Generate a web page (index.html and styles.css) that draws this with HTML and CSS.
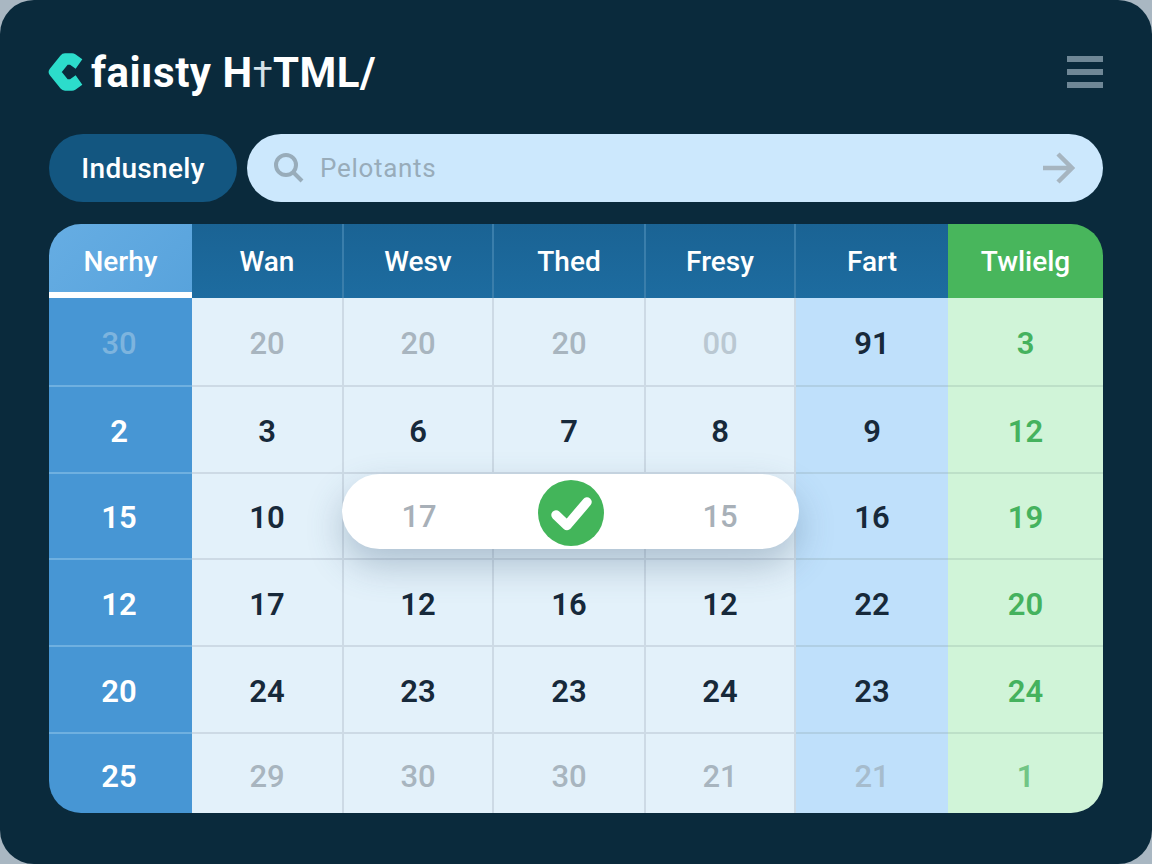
FILE: index.html
```html
<!DOCTYPE html>
<html lang="en">

<head>
  <meta charset="UTF-8" />
  <meta name="viewport" content="width=device-width, initial-scale=1.0" />
  <title>faiısty HTML/</title>
  <link rel="stylesheet" href="styles.css">
</head>

<body>
  <div class="app">
    <header class="topbar">
      <div class="brand">
        <svg class="logo" viewBox="0 0 35 38" width="35" height="38">
          <path d="M31 11 L24 6 L17 6 L6.500 19 L17 32 L24 32 L31 27" />
        </svg>
        <span class="brand-name">faiısty H<span class="brand-odd">†</span>TML/</span>
      </div>
      <div class="menu">
        <span></span>
        <span></span>
        <span></span>
      </div>
    </header>

    <div class="filters">
      <div class="pill">Indusnely</div>
      <div class="search">
        <svg class="search-icon" viewBox="0 0 32 32" width="32" height="32">
          <circle cx="13" cy="13" r="10" />
          <path d="M20.500 20.500 L29 29" />
        </svg>
        <span class="search-text">Pelotants</span>
        <svg class="arrow-icon" viewBox="0 0 32 32" width="32" height="32">
          <path d="M0 16 H28 M15 2 L29 16 L15 30" />
        </svg>
      </div>
    </div>

    <div class="calendar">
      <div class="head head-first">Nerhy</div>
      <div class="head">Wan</div>
      <div class="head">Wesv</div>
      <div class="head">Thed</div>
      <div class="head">Fresy</div>
      <div class="head head-sky">Fart</div>
      <div class="head head-last">Twlielg</div>

      <div class="cell side faint">30</div>
      <div class="cell muted">20</div>
      <div class="cell muted">20</div>
      <div class="cell muted">20</div>
      <div class="cell muted light">00</div>
      <div class="cell sky">91</div>
      <div class="cell mint">3</div>

      <div class="cell side">2</div>
      <div class="cell">3</div>
      <div class="cell">6</div>
      <div class="cell">7</div>
      <div class="cell">8</div>
      <div class="cell sky">9</div>
      <div class="cell mint">12</div>

      <div class="cell side">15</div>
      <div class="cell">10</div>
      <div class="cell"></div>
      <div class="cell"></div>
      <div class="cell"></div>
      <div class="cell sky">16</div>
      <div class="cell mint">19</div>

      <div class="cell side">12</div>
      <div class="cell">17</div>
      <div class="cell">12</div>
      <div class="cell">16</div>
      <div class="cell">12</div>
      <div class="cell sky">22</div>
      <div class="cell mint">20</div>

      <div class="cell side">20</div>
      <div class="cell">24</div>
      <div class="cell">23</div>
      <div class="cell">23</div>
      <div class="cell">24</div>
      <div class="cell sky">23</div>
      <div class="cell mint">24</div>

      <div class="cell side last-row corner-left">25</div>
      <div class="cell muted last-row">29</div>
      <div class="cell muted last-row">30</div>
      <div class="cell muted last-row">30</div>
      <div class="cell muted last-row">21</div>
      <div class="cell sky muted-sky last-row">21</div>
      <div class="cell mint mint-soft last-row corner-right">1</div>

      <div class="popup">
        <span class="popup-num">17</span>
        <span class="check">
          <svg viewBox="0 0 66 66" width="66" height="66">
            <path d="M18 35 L29 45.500 L49 22" />
          </svg>
        </span>
        <span class="popup-num">15</span>
      </div>
    </div>
  </div>
</body>

</html>
```

FILE: styles.css
```css
* {
  margin: 0;
  padding: 0;
  box-sizing: border-box;
}

body {
  font-family: "Roboto", "Liberation Sans", sans-serif;
  background-color: #a9b7c2;
  height: 100vh;
  overflow: hidden;
}

.app {
  height: 864px;
  padding: 50px 49px 51px;
  border-radius: 34px;
  background-color: #0a2a3c;
  display: flex;
  flex-direction: column;
}

.topbar {
  height: 44px;
  display: flex;
  justify-content: space-between;
  align-items: center;
}

.brand {
  display: flex;
  align-items: center;
  gap: 8px;
  margin-left: -1px;
}

.logo path {
  fill: none;
  stroke: #2cdccb;
  stroke-width: 11.500;
  stroke-linejoin: round;
}

.brand-name {
  font-size: 42px;
  font-weight: 700;
  color: #fff;
  letter-spacing: 0.5px;
}

.brand-odd {
  font-weight: 400;
  font-size: 36px;
  color: #d5e2e8;
}

.menu {
  width: 36px;
  display: flex;
  flex-direction: column;
  gap: 7px;
}

.menu span {
  height: 6px;
  background-color: #6f8796;
}

.filters {
  margin-top: 40px;
  display: flex;
  gap: 10px;
}

.pill {
  width: 188px;
  height: 68px;
  border-radius: 34px;
  background-color: #135680;
  color: #fff;
  font-size: 28px;
  font-weight: 500;
  letter-spacing: 0.3px;
  display: flex;
  justify-content: center;
  align-items: center;
}

.search {
  flex: 1;
  height: 68px;
  border-radius: 34px;
  background-color: #cce8fd;
  padding: 0 28px 0 26px;
  display: flex;
  align-items: center;
  gap: 15px;
}

.search-icon circle,
.search-icon path {
  fill: none;
  stroke: #98acba;
  stroke-width: 4;
}

.search-text {
  flex: 1;
  font-size: 26px;
  letter-spacing: 0.7px;
  color: #98acba;
}

.arrow-icon path {
  fill: none;
  stroke: #a6b5c0;
  stroke-width: 4.500;
}

.calendar {
  position: relative;
  margin-top: 22px;
  display: grid;
  grid-template-columns: 143px 152px 150px 152px 150px 152px 155px;
  grid-template-rows: 74px 89px 87px 86px 87px 87px 79px;
}

.head {
  background: linear-gradient(180deg, #1a6394, #1d6ca0);
  border-right: 2px solid #3a7eab;
  color: #fff;
  font-size: 28px;
  font-weight: 500;
  display: flex;
  justify-content: center;
  align-items: center;
}

.head-first {
  background: linear-gradient(135deg, #66ade3, #58a3dc);
  border-right: none;
  border-bottom: 6px solid #fff;
  border-top-left-radius: 32px;
  padding-top: 6px;
}

.head-sky {
  border-right: none;
}

.head-last {
  background: #48b65c;
  border-right: none;
  border-top-right-radius: 32px;
}

.cell {
  background-color: #e3f1fa;
  border-right: 2px solid #cddae5;
  border-bottom: 2px solid #cddae5;
  color: #17293a;
  font-size: 31px;
  font-weight: 600;
  padding-top: 3px;
  display: flex;
  justify-content: center;
  align-items: center;
}

.side {
  background-color: #4796d4;
  border-right: none;
  border-bottom-color: #6fb0e0;
  color: #fff;
  padding-right: 3px;
}

.faint {
  color: #7db4de;
  font-weight: 500;
}

.muted {
  color: #a8b5bf;
  font-weight: 500;
}

.light {
  color: #bac8d2;
}

.sky {
  background-color: #bfe0fb;
  border-right: none;
  border-bottom-color: #b0cfe4;
}

.muted-sky {
  color: #a6bccd;
  font-weight: 500;
}

.mint {
  background-color: #d0f4d8;
  border-right: none;
  border-bottom-color: #bde0c8;
  color: #45b25e;
}

.mint-soft {
  color: #72c585;
}

.last-row {
  border-bottom: none;
  padding-top: 5px;
}

.corner-left {
  border-bottom-left-radius: 32px;
}

.corner-right {
  border-bottom-right-radius: 32px;
}

.popup {
  position: absolute;
  left: 293px;
  top: 250px;
  width: 457px;
  height: 75px;
  border-radius: 38px;
  background-color: #fff;
  box-shadow: 0 16px 36px rgba(60, 90, 120, 0.32);
  display: grid;
  grid-template-columns: 154px 150px 148px;
  align-items: center;
  justify-items: center;
}

.popup-num {
  font-size: 31px;
  font-weight: 500;
  color: #a8b0b8;
  padding-top: 10px;
}

.check {
  width: 66px;
  height: 66px;
  border-radius: 50%;
  background-color: #43b55a;
  margin-top: 3px;
}

.check path {
  fill: none;
  stroke: #fff;
  stroke-width: 9.500;
  stroke-linejoin: round;
  stroke-linecap: round;
}
```
